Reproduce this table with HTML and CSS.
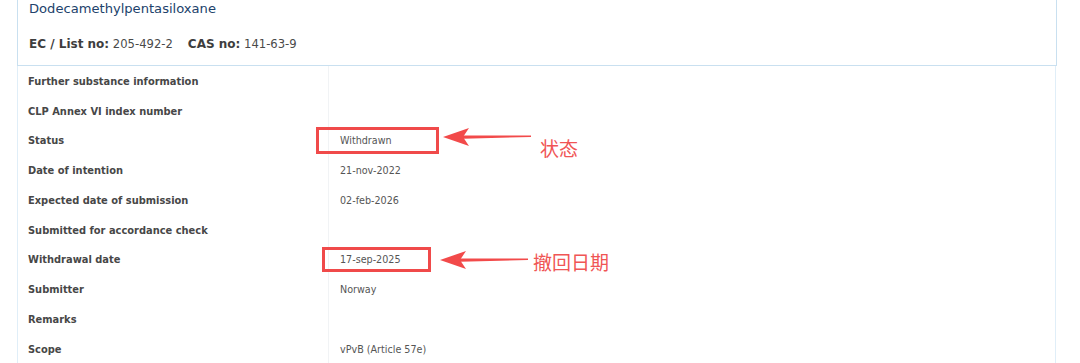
FILE: index.html
```html
<!DOCTYPE html>
<html lang="en">
<head>
<meta charset="utf-8">
<title>Dodecamethylpentasiloxane</title>
<link rel="stylesheet" href="styles.css">
</head>
<body>
<div class="page">
  <div class="substance">
    <h1 class="substance-name">Dodecamethylpentasiloxane</h1>
    <p class="ids"><b>EC / List no:</b> 205-492-2<span class="gap"></span><b>CAS no:</b> 141-63-9</p>
  </div>
  <div class="details">
    <div class="row"><div class="label">Further substance information</div><div class="value"></div></div>
    <div class="row"><div class="label">CLP Annex VI index number</div><div class="value"></div></div>
    <div class="row"><div class="label">Status</div><div class="value">Withdrawn</div></div>
    <div class="row"><div class="label">Date of intention</div><div class="value">21-nov-2022</div></div>
    <div class="row"><div class="label">Expected date of submission</div><div class="value">02-feb-2026</div></div>
    <div class="row"><div class="label">Submitted for accordance check</div><div class="value"></div></div>
    <div class="row"><div class="label">Withdrawal date</div><div class="value">17-sep-2025</div></div>
    <div class="row"><div class="label">Submitter</div><div class="value">Norway</div></div>
    <div class="row"><div class="label">Remarks</div><div class="value"></div></div>
    <div class="row"><div class="label">Scope</div><div class="value">vPvB (Article 57e)</div></div>
  </div>

  <!-- annotations -->
  <div class="mark mark-status"></div>
  <svg class="arrow arrow-status" width="90" height="22" viewBox="0 0 90 22">
    <path d="M88 9.6 L20 9.4 L20 12.8 L88 11 Z" fill="#f24a4a"/>
    <path d="M0 11 L26 2 L20 11 L26 20 Z" fill="#f24a4a"/>
  </svg>
  <span class="note note-status">状态</span>

  <div class="mark mark-date"></div>
  <svg class="arrow arrow-date" width="90" height="22" viewBox="0 0 90 22">
    <path d="M88 9.6 L20 9.4 L20 12.8 L88 11 Z" fill="#f24a4a"/>
    <path d="M0 11 L26 2 L20 11 L26 20 Z" fill="#f24a4a"/>
  </svg>
  <span class="note note-date">撤回日期</span>
</div>
</body>
</html>
```

FILE: styles.css
```css
html, body {
  margin: 0;
  padding: 0;
  background: #ffffff;
}

.page {
  position: relative;
  width: 1080px;
  height: 363px;
  overflow: hidden;
  font-family: "DejaVu Sans", Verdana, sans-serif;
}

.substance {
  margin-left: 17px;
  width: 1040px;
  height: 66px;
  border: 1px solid #c9e0f0;
  border-top: none;
  box-sizing: border-box;
  padding: 0 0 0 11px;
}

.substance-name {
  margin: 0;
  font-size: 13.1px;
  font-weight: normal;
  color: #21426b;
  line-height: 17px;
}

.ids {
  margin: 20px 0 0 0;
  font-size: 11.6px;
  color: #4a4a4a;
  line-height: 14px;
}

.ids b {
  font-size: 12px;
  font-weight: bold;
  color: #3e3e3e;
}

.ids .gap {
  display: inline-block;
  width: 15px;
}

.details {
  margin-left: 17px;
  width: 1039px;
  border-left: 1px solid #e0eef8;
  border-right: 1px solid #e0eef8;
  box-sizing: border-box;
}

.row {
  display: grid;
  grid-template-columns: 311px 1fr;
  height: 29.75px;
}

.label,
.value {
  height: 100%;
  box-sizing: border-box;
  padding-top: 1px;
  display: flex;
  align-items: center;
}

.label {
  padding-left: 10px;
  font-size: 9.9px;
  font-weight: bold;
  color: #474747;
  border-right: 1px solid #f1f3f5;
}

.value {
  padding-left: 11px;
  font-size: 9.6px;
  color: #555;
}

.mark {
  position: absolute;
  border: 3px solid #f04a4a;
  box-sizing: border-box;
}

.mark-status {
  left: 316px;
  top: 127px;
  width: 123px;
  height: 27px;
}

.mark-date {
  left: 322px;
  top: 247px;
  width: 109px;
  height: 25px;
}

.arrow {
  position: absolute;
}

.arrow-status {
  left: 443px;
  top: 126px;
}

.arrow-date {
  left: 440px;
  top: 249px;
}

.note {
  position: absolute;
  font-family: "Noto Sans CJK SC", sans-serif;
  font-size: 19px;
  color: #f05555;
  line-height: 22px;
}

.note-status {
  left: 540px;
  top: 137px;
}

.note-date {
  left: 533px;
  top: 251px;
}
```
